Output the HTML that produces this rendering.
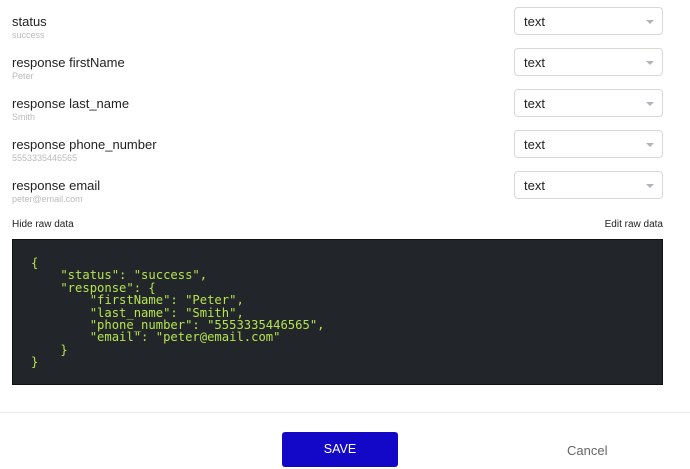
<!DOCTYPE html>
<html><head><style>
body{margin:0;width:690px;height:469px;background:#fff;font-family:"Liberation Sans",sans-serif;position:relative;overflow:hidden}
.row{position:absolute;left:12px}
.l{font-size:13px;color:#222;line-height:16px}
.s{font-size:9px;color:#bbb;line-height:10px}
.sel{position:absolute;left:514px;width:147px;height:26px;border:1px solid #d8d8d8;border-radius:4px;box-sizing:content-box}
.sel span{position:absolute;left:9px;top:6px;font-size:13px;color:#222}
.sel i{position:absolute;right:8px;top:12px;border-left:4px solid transparent;border-right:4px solid transparent;border-top:4px solid #b0b4bb}
.code{position:absolute;left:12px;top:239px;width:651px;height:146px;background:#22262a;border:1px solid #111;box-sizing:border-box}
pre{margin:0;position:absolute;left:18px;top:17px;font-family:"DejaVu Sans Mono",monospace;font-size:12.2px;line-height:12.4px;color:#b5e34d}
</style></head><body>
<div class="row" style="top:14px"><div class="l">status</div><div class="s">success</div></div>
<div class="row" style="top:55px"><div class="l">response firstName</div><div class="s">Peter</div></div>
<div class="row" style="top:96px"><div class="l">response last_name</div><div class="s">Smith</div></div>
<div class="row" style="top:137px"><div class="l">response phone_number</div><div class="s">5553335446565</div></div>
<div class="row" style="top:178px"><div class="l">response email</div><div class="s">peter@email.com</div></div>
<div class="sel" style="top:7px"><span>text</span><i></i></div>
<div class="sel" style="top:48px"><span>text</span><i></i></div>
<div class="sel" style="top:89px"><span>text</span><i></i></div>
<div class="sel" style="top:130px"><span>text</span><i></i></div>
<div class="sel" style="top:171px"><span>text</span><i></i></div>
<div style="position:absolute;left:12px;top:219px;font-size:10px;color:#222">Hide raw data</div>
<div style="position:absolute;right:27px;top:219px;font-size:10px;color:#222">Edit raw data</div>
<div class="code"><pre>{
    "status": "success",
    "response": {
        "firstName": "Peter",
        "last_name": "Smith",
        "phone_number": "5553335446565",
        "email": "peter@email.com"
    }
}</pre></div>
<div style="position:absolute;left:0;top:412px;width:690px;height:1px;background:#ececec"></div>
<div style="position:absolute;left:282px;top:432px;width:116px;height:35px;background:#1408c8;border-radius:3px;color:#fff;font-size:12.5px;text-align:center;line-height:35px">SAVE</div>
<div style="position:absolute;left:567px;top:443px;font-size:13px;color:#666">Cancel</div>
</body></html>
